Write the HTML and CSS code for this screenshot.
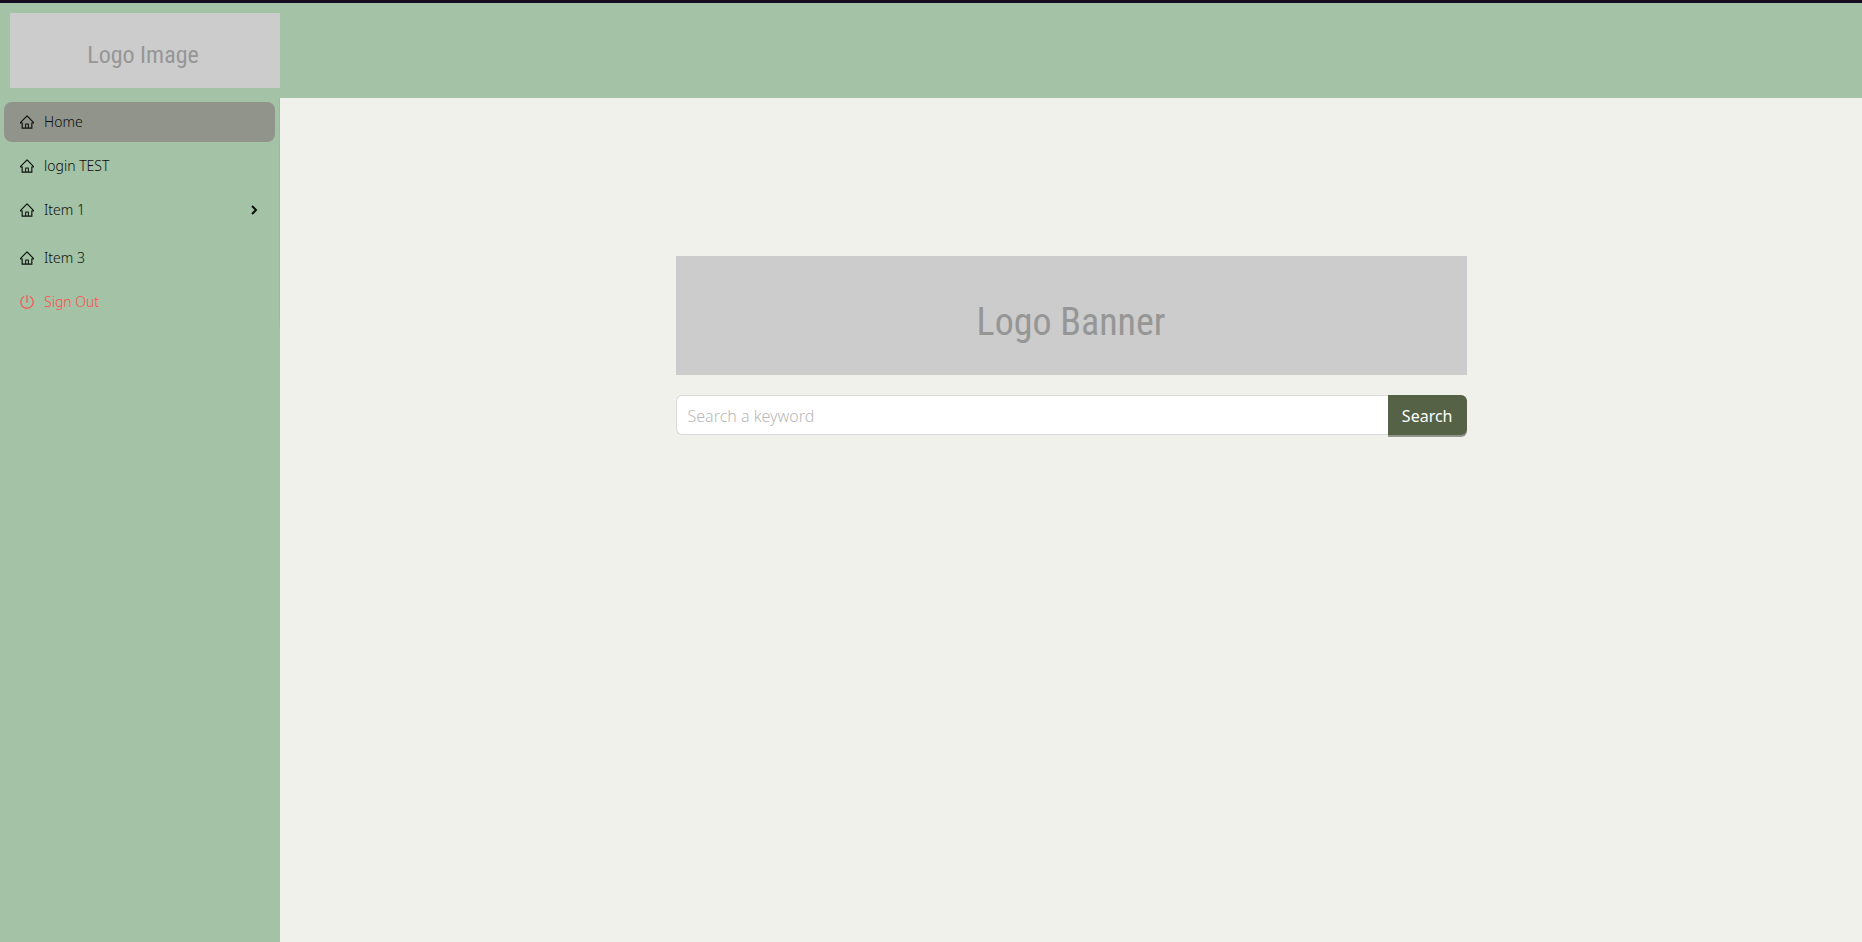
FILE: index.html
```html
<!DOCTYPE html>
<html lang="en">
<head>
<meta charset="utf-8">
<title>Home</title>
<link rel="stylesheet" href="styles.css">
</head>
<body>
<svg class="sprite" aria-hidden="true">
  <symbol id="home" viewBox="64 64 896 896"><path d="M946.5 505L560.1 118.8l-25.9-25.9a31.5 31.5 0 00-44.4 0L77.5 505a63.9 63.9 0 00-18.8 46c.4 35.2 29.7 63.3 64.9 63.3h42.5V940h691.8V614.3h43.4c17.1 0 33.2-6.7 45.3-18.8a63.6 63.6 0 0018.7-45.3c0-17-6.7-33.1-18.8-45.2zM568 868H456V664h112v204zm217.9-325.7V868H632V640c0-22.1-17.9-40-40-40H432c-22.1 0-40 17.9-40 40v228H238.1V542.3h-96l370-369.7 23.1 23.1L882 542.3h-96.1z"/></symbol>
  <symbol id="power" viewBox="64 64 896 896"><path d="M705.6 124.9a8 8 0 00-11.6 7.2v64.2c0 5.5 2.9 10.6 7.5 13.6a352.2 352.2 0 0162.2 49.8c32.7 32.8 58.4 70.9 76.3 113.3a355 355 0 0127.9 138.7c0 48.1-9.4 94.8-27.9 138.7a355.92 355.92 0 01-76.3 113.3 353.06 353.06 0 01-113.2 76.4c-43.8 18.6-90.5 28-138.5 28s-94.7-9.4-138.5-28a353.06 353.06 0 01-113.2-76.4A355.92 355.92 0 01184 650.4a355 355 0 01-27.9-138.7c0-48.1 9.4-94.8 27.9-138.7 17.9-42.4 43.6-80.5 76.3-113.3 19-19 39.8-35.6 62.2-49.8 4.7-2.9 7.5-8.1 7.5-13.6V132c0-6-6.3-9.8-11.6-7.2C178.5 195.2 82 339.3 80 506.3 77.2 745.1 272.5 943.5 511.2 944c239 .5 432.8-193.3 432.8-432.4 0-169.2-97-315.7-238.4-386.7zM480 560h64c4.4 0 8-3.6 8-8V88c0-4.4-3.6-8-8-8h-64c-4.4 0-8 3.6-8 8v464c0 4.4 3.6 8 8 8z"/></symbol>
</svg>
<header class="header">
  <div class="logo">Logo Image</div>
</header>
<div class="layout">
  <aside class="sidebar">
    <nav class="menu">
      <a class="item active" href="#"><svg class="icon"><use href="#home"/></svg>Home</a>
      <a class="item" href="#"><svg class="icon"><use href="#home"/></svg>login TEST</a>
      <button class="item submenu" type="button" aria-expanded="false"><svg class="icon"><use href="#home"/></svg>Item 1<svg class="arrow" viewBox="0 0 10 10"><path d="M3 1L7 5L3 9"/></svg></button>
      <a class="item" href="#"><svg class="icon"><use href="#home"/></svg>Item 3</a>
      <a class="item danger" href="#"><svg class="icon"><use href="#power"/></svg>Sign Out</a>
    </nav>
  </aside>
  <main class="main">
    <div class="banner">Logo Banner</div>
    <form class="search">
      <input class="field" type="text" placeholder="Search a keyword" aria-label="Search a keyword">
      <button class="submit" type="button">Search</button>
    </form>
  </main>
</div>
</body>
</html>
```

FILE: styles.css
```css
* {
  box-sizing: border-box;
}

body {
  margin: 0;
  min-height: 100vh;
  display: flex;
  flex-direction: column;
  background: #f0f1ea;
  border-top: 3px solid #150a20;
  font-family: "Noto Sans", sans-serif;
  font-size: 14px;
  line-height: 22px;
  color: #0c0f0c;
}

.sprite {
  display: none;
}

.header {
  padding: 10px;
  background: #a4c2a5;
}

.logo,
.banner {
  display: flex;
  align-items: center;
  justify-content: center;
  background: #cccccc;
  color: #969696;
  font-family: "Roboto Condensed", "Liberation Sans", sans-serif;
}

.logo {
  width: 270px;
  height: 75px;
  padding-top: 8px;
  padding-right: 4px;
  font-size: 24px;
}

.layout {
  flex: 1;
  display: flex;
}

.sidebar {
  flex: 0 0 280px;
  background: #a4c2a5;
}

.menu {
  display: flex;
  flex-direction: column;
  gap: 4px;
  padding: 4px;
  padding-bottom: 5px;
  border-right: 1px solid #9cbb9d;
}

.item {
  display: flex;
  align-items: center;
  gap: 10px;
  height: 40px;
  padding: 0 16px;
  border: 0;
  border-radius: 8px;
  background: none;
  color: inherit;
  font: inherit;
  font-weight: 300;
  text-align: left;
  text-decoration: none;
}

.active {
  background: #91948a;
}

.submenu {
  margin-bottom: 4px;
}

.danger {
  color: #ff4d4f;
}

.icon {
  width: 14px;
  height: 14px;
  fill: currentColor;
}

.arrow {
  width: 10px;
  height: 10px;
  margin-left: auto;
  fill: none;
  stroke: currentColor;
  stroke-width: 2;
}

.main {
  flex: 1;
  display: flex;
  flex-direction: column;
  align-items: center;
  gap: 20px;
  padding-top: 158px;
}

.banner {
  width: 50%;
  height: 119px;
  padding-top: 12px;
  font-size: 38px;
}

.search {
  display: flex;
  align-items: flex-start;
  width: 50%;
}

.field {
  flex: 1;
  min-width: 0;
  height: 40px;
  padding: 2px 11px 0;
  border: 1px solid #d9d9d9;
  border-right: 0;
  border-radius: 6px 0 0 6px;
  background: #ffffff;
  font: inherit;
  font-size: 16px;
  font-weight: 300;
}

.field::placeholder {
  color: #b8b8b8;
}

.submit {
  height: 40px;
  padding: 2px 14px 0;
  border: 0;
  border-radius: 0 6px 6px 0;
  background: #556246;
  box-shadow: 0 2px 0 #91948a;
  color: #ffffff;
  font: inherit;
  font-size: 16px;
}
```
